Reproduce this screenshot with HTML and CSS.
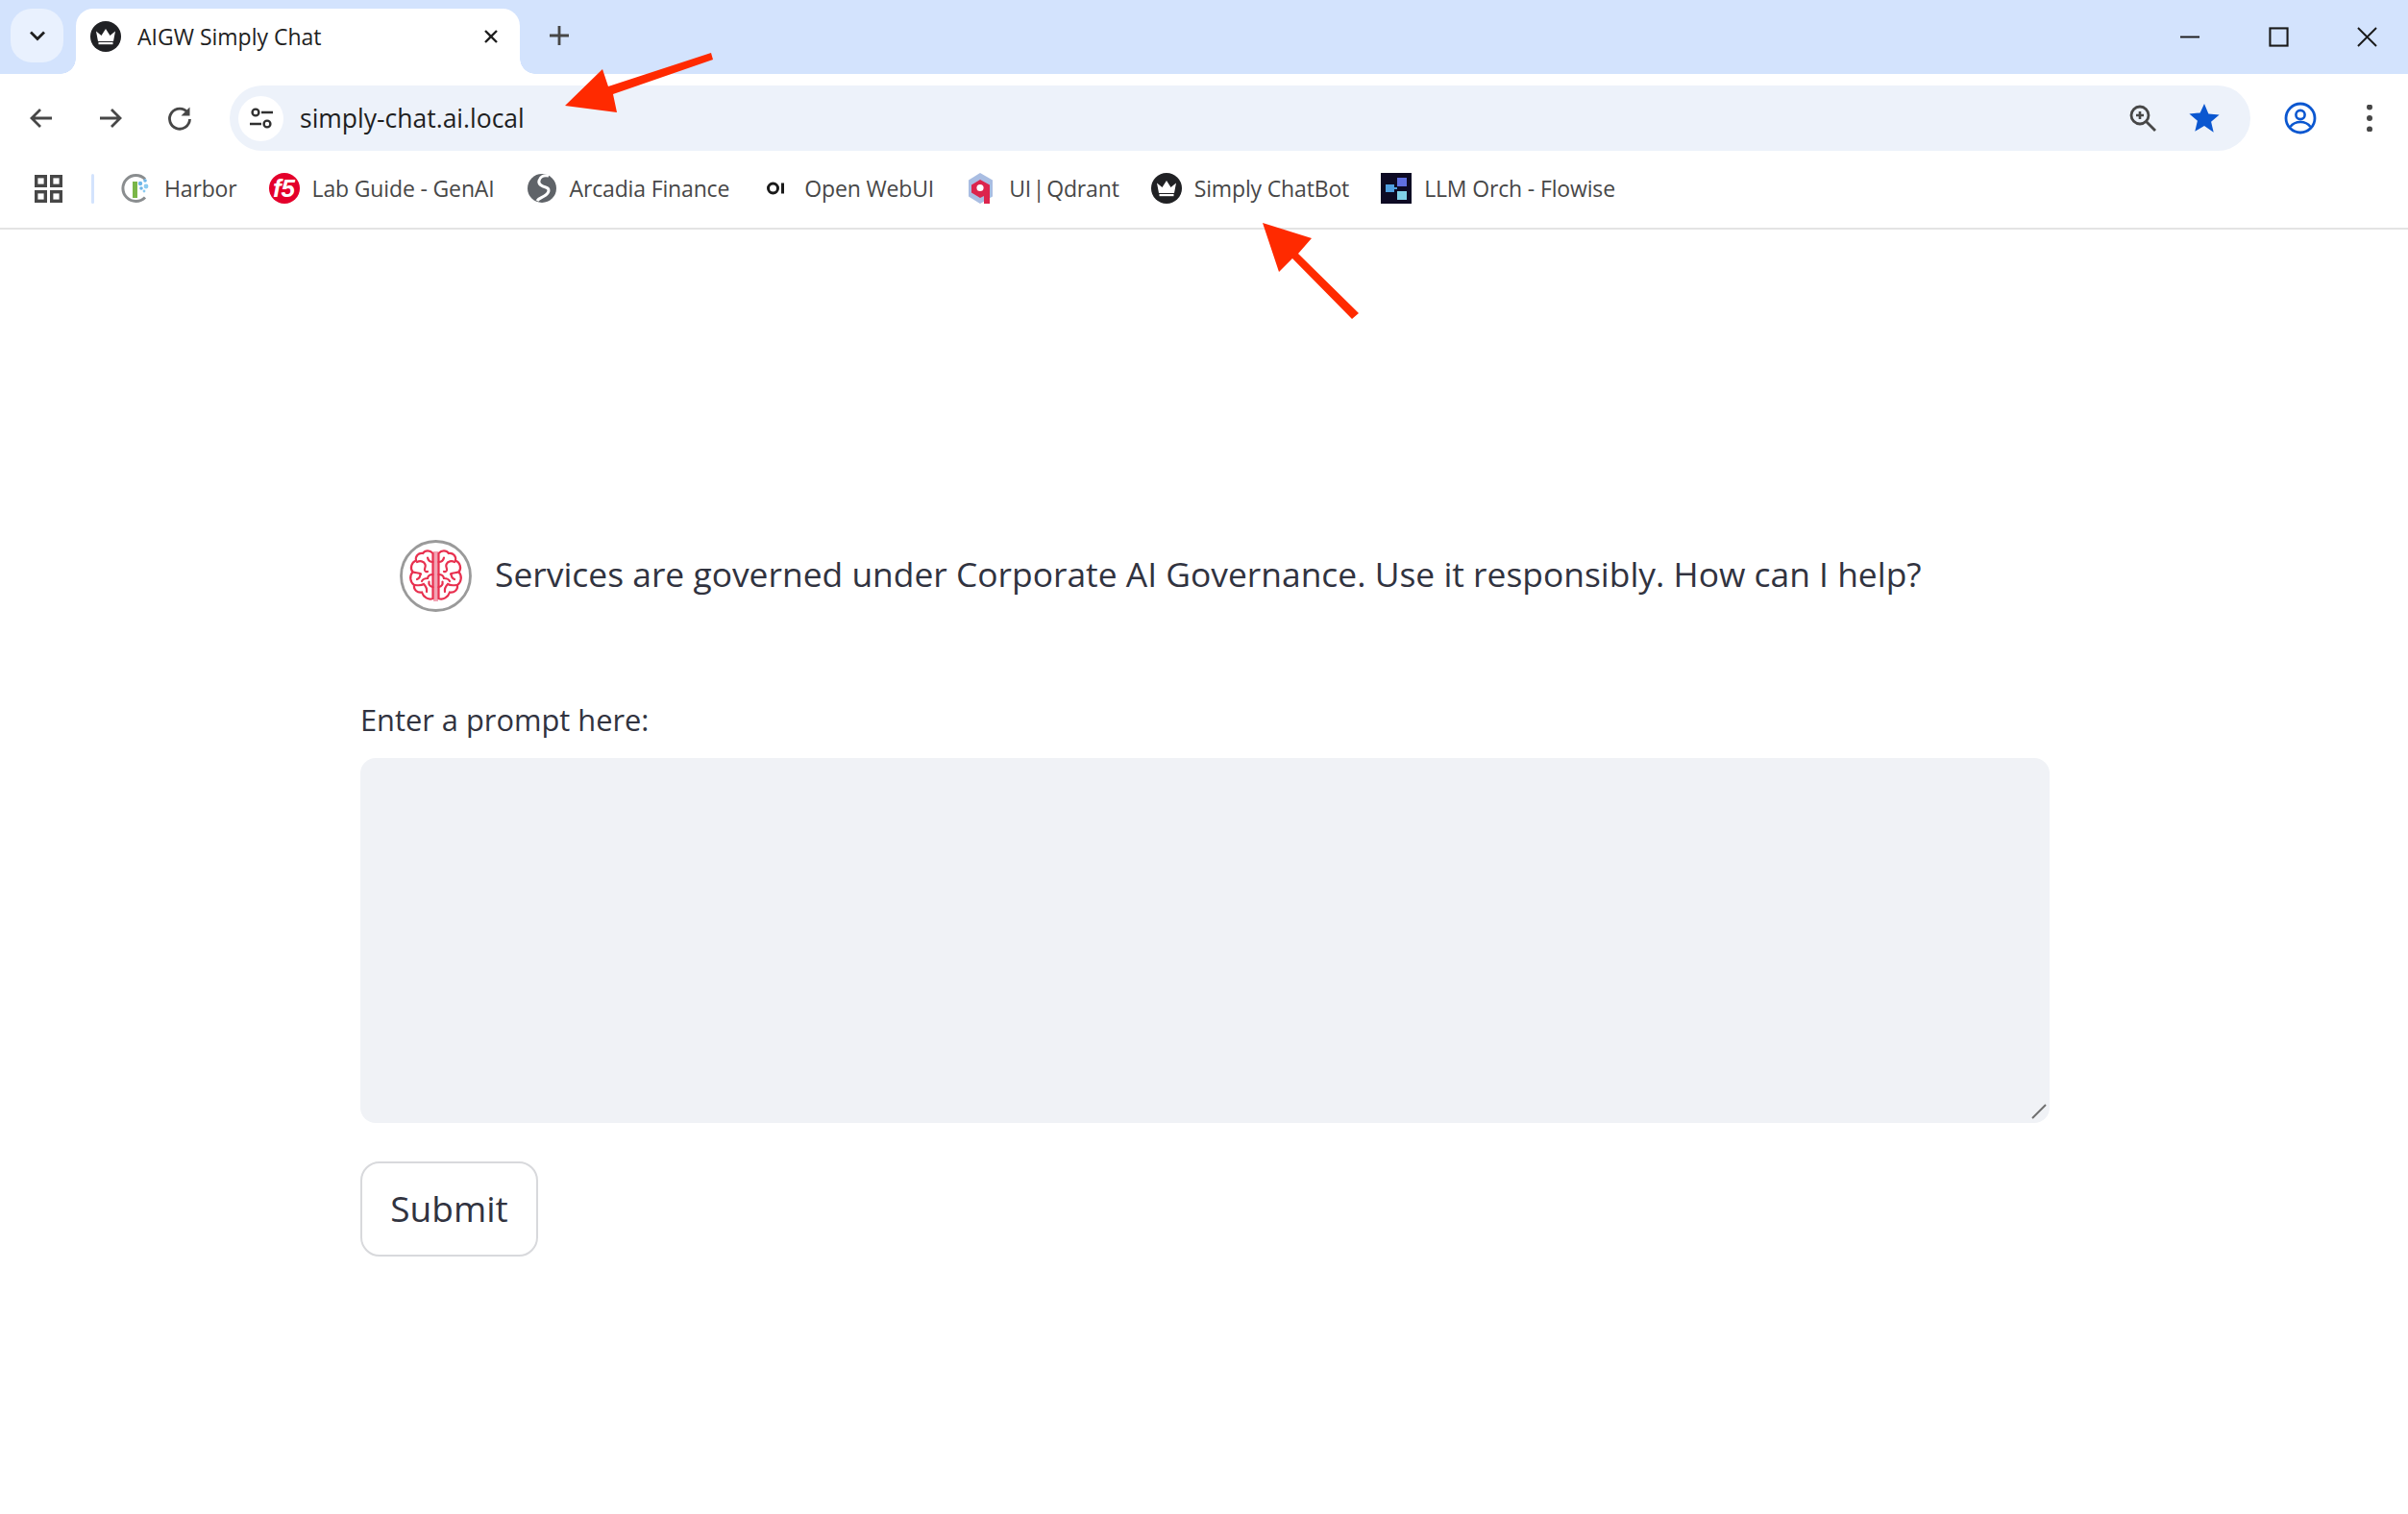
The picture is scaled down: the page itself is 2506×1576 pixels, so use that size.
FILE: index.html
```html
<!DOCTYPE html>
<html lang="en">
<head>
<meta charset="utf-8">
<title>AIGW Simply Chat</title>
<link rel="stylesheet" href="styles.css">
</head>
<body>
<svg class="defs" width="0" height="0" aria-hidden="true">
  <defs>
    <symbol id="crown" viewBox="0 0 32 32">
      <circle cx="16" cy="16" r="16" fill="#202124"/>
      <path d="M6 10.500l5.500 4.500L16 8l4.500 7 5.500-4.500-2 10.500H8z" fill="#fff"/>
      <rect x="8.500" y="22" width="15" height="2.200" fill="#fff"/>
    </symbol>
  </defs>
</svg>

<header class="chrome">
  <div class="tabstrip">
    <button class="tab-search" aria-label="Search tabs">
      <svg class="ic-chev" viewBox="0 0 20 20"><path d="M3 6.500l7 7 7-7" fill="none" stroke="#1f1f1f" stroke-width="2.800"/></svg>
    </button>
    <div class="tab">
      <svg class="ic-32"><use href="#crown"/></svg>
      <span class="tab-title">AIGW Simply Chat</span>
      <svg class="ic-close" viewBox="0 0 16 16"><path d="M2 2l12 12M14 2L2 14" stroke="#1f1f1f" stroke-width="2.400"/></svg>
    </div>
    <svg class="ic-plus" viewBox="0 0 22 22"><path d="M11 1v20M1 11h20" stroke="#474747" stroke-width="2.800"/></svg>
    <div class="win-controls">
      <svg class="ic-win" viewBox="0 0 22 22"><path d="M0 11h21" stroke="#1a1a1a" stroke-width="2"/></svg>
      <svg class="ic-win" viewBox="0 0 22 22"><rect x="1.500" y="1.500" width="19" height="19" fill="none" stroke="#1a1a1a" stroke-width="2.200"/></svg>
      <svg class="ic-win" viewBox="0 0 22 22"><path d="M1 1l20 20M21 1L1 21" stroke="#1a1a1a" stroke-width="2"/></svg>
    </div>
  </div>

  <div class="toolbar">
    <button class="tool-btn" aria-label="Back">
      <svg class="ic-28" viewBox="0 0 28 28"><path d="M25 14H4M13 5l-9 9 9 9" fill="none" stroke="#474747" stroke-width="2.800"/></svg>
    </button>
    <button class="tool-btn" aria-label="Forward">
      <svg class="ic-28" viewBox="0 0 28 28"><path d="M3 14h21M15 5l9 9-9 9" fill="none" stroke="#474747" stroke-width="2.800"/></svg>
    </button>
    <button class="tool-btn" aria-label="Reload">
      <svg class="ic-28" viewBox="0 0 28 28"><path d="M22.500 8.500A10.500 10.500 0 1 0 24.500 15" fill="none" stroke="#474747" stroke-width="2.800"/><path d="M24.500 2.500v9h-9z" fill="#474747"/></svg>
    </button>
    <div class="omnibox">
      <span class="site-chip">
        <svg class="ic-28" viewBox="0 0 28 28"><circle cx="8" cy="8" r="3.400" fill="none" stroke="#303030" stroke-width="2.400"/><path d="M14 8h12M2 20h12" stroke="#303030" stroke-width="2.400"/><circle cx="20" cy="20" r="3.400" fill="none" stroke="#303030" stroke-width="2.400"/></svg>
      </span>
      <span class="url">simply-chat.ai.local</span>
      <span class="omni-actions">
        <span class="omni-btn">
          <svg class="ic-28" viewBox="0 0 28 28"><circle cx="11" cy="11" r="9" fill="none" stroke="#474747" stroke-width="2.800"/><path d="M17.500 17.500L27 27" stroke="#474747" stroke-width="2.800"/><path d="M11 7v8M7 11h8" stroke="#474747" stroke-width="2.600"/></svg>
        </span>
        <span class="omni-btn">
          <svg class="ic-32" viewBox="0 0 32 32"><path d="M16 1l4.400 10.400 11.200 1-8.500 7.400 2.600 11L16 24l-9.700 5.800 2.600-11L.4 11.400l11.200-1z" fill="#0b57d0"/></svg>
        </span>
      </span>
    </div>
    <button class="tool-btn" aria-label="Profile">
      <svg class="ic-34" viewBox="0 0 34 34"><circle cx="17" cy="17" r="15" fill="none" stroke="#0b57d0" stroke-width="2.800"/><circle cx="17" cy="13.500" r="4.600" fill="none" stroke="#0b57d0" stroke-width="2.600"/><path d="M6.500 26c3-4 6.500-5 10.500-5s7.500 1 10.500 5" fill="none" stroke="#0b57d0" stroke-width="2.600"/></svg>
    </button>
    <button class="tool-btn" aria-label="Menu">
      <svg class="ic-28" viewBox="0 0 28 28"><circle cx="14" cy="2.500" r="3" fill="#474747"/><circle cx="14" cy="14" r="3" fill="#474747"/><circle cx="14" cy="25.500" r="3" fill="#474747"/></svg>
    </button>
  </div>

  <nav class="bookmarks">
    <svg class="ic-apps" viewBox="0 0 29 29"><g fill="none" stroke="#474747" stroke-width="3.400"><rect x="1.700" y="1.700" width="9.600" height="9.600"/><rect x="17.700" y="1.700" width="9.600" height="9.600"/><rect x="1.700" y="17.700" width="9.600" height="9.600"/><rect x="17.700" y="17.700" width="9.600" height="9.600"/></g></svg>
    <span class="bm-sep"></span>
    <div class="bm-list">
      <a class="bm">
        <svg class="ic-32" viewBox="0 0 32 32"><path d="M25 6.500A13.500 13.500 0 1 0 25 25.500" fill="none" stroke="#8a8d8f" stroke-width="3"/><rect x="12" y="9" width="5" height="17" fill="#7ab648"/><circle cx="20" cy="11" r="2.200" fill="#6db6e8"/><circle cx="25" cy="8" r="1.800" fill="#6db6e8"/><circle cx="26" cy="14" r="2.400" fill="#8ccbf0"/><circle cx="21" cy="16" r="1.800" fill="#6db6e8"/><circle cx="24" cy="19" r="1.400" fill="#8ccbf0"/></svg>
        <span>Harbor</span>
      </a>
      <a class="bm">
        <svg class="ic-32" viewBox="0 0 32 32"><circle cx="16" cy="16" r="16" fill="#e4002b"/><text class="f5-mark" x="15.500" y="25">f5</text></svg>
        <span>Lab Guide - GenAI</span>
      </a>
      <a class="bm">
        <svg class="ic-32" viewBox="0 0 32 32"><circle cx="16" cy="16" r="15" fill="#5f6368"/><path d="M23 3c-5-1-9 1-10 5s3 6 7 7 4 5 0 8-7 3-9 6" fill="none" stroke="#fff" stroke-width="3"/></svg>
        <span>Arcadia Finance</span>
      </a>
      <a class="bm">
        <svg class="ic-32" viewBox="0 0 32 32"><circle cx="12.500" cy="16" r="5" fill="none" stroke="#1a1a1a" stroke-width="3"/><rect x="21" y="10.500" width="3" height="11" fill="#1a1a1a"/></svg>
        <span>Open WebUI</span>
      </a>
      <a class="bm">
        <svg class="ic-32" viewBox="0 0 32 32"><path d="M15 0l13 7.500v17L15 32 3 24.500v-17z" fill="#a9bde2"/><path d="M15 7l10 5.500V32h-6v-8l-4 2-9-5.500v-8z" fill="#dc244c"/><circle cx="15" cy="15.500" r="3.600" fill="#fff"/></svg>
        <span class="bm-tight">UI | Qdrant</span>
      </a>
      <a class="bm">
        <svg class="ic-32"><use href="#crown"/></svg>
        <span>Simply ChatBot</span>
      </a>
      <a class="bm">
        <svg class="ic-32" viewBox="0 0 32 32"><rect width="32" height="32" fill="#0d0a24"/><rect x="17" y="5" width="10" height="9" fill="#5f6fe0"/><rect x="17" y="19" width="10" height="9" fill="#7fd0e8"/><rect x="5" y="12" width="9" height="8" fill="#4f9fe0"/><path d="M14 16h3" stroke="#4f9fe0" stroke-width="2"/></svg>
        <span>LLM Orch - Flowise</span>
      </a>
    </div>
  </nav>
</header>

<main class="page">
  <div class="greeting">
    <svg class="brain" viewBox="0 0 75 75">
      <circle cx="37.500" cy="37.500" r="36" fill="#fff" stroke="#9a9a9a" stroke-width="2.800"/>
      <path d="M37.500 12v52" stroke="#f2a3b3" stroke-width="5"/>
      <g fill="none" stroke="#e8304f" stroke-width="2.200" stroke-linecap="round">
        <path d="M34.500 14c-3-3.500-8-3.500-10.500 0-4.500-.8-8 3-7 7.500-5 2-6.500 8-3.500 12-3.700 4-2.700 10.500 1.500 13.500-.8 5 3.500 8.500 8 7.500 1.500 5 7 8.500 11.500 6.500z"/>
        <path d="M34.500 23c-3 0-5-2-5.500-4.500M18 23c3-1.500 7-1 8.500 2.500 1 2.500-1 4-.5 6 .5 1.500 2 2 3 1.500M14 33.500c3 1 6 .5 8 2M21.500 35c0 3-1 5-3.500 6M34.500 36c-3 0-5 1-5.500 4-3 0-5 1-6 3M34.500 49c-3.500-.5-4.500-3-4-5.500M16 47c4 .5 7 .5 9-1 2 2 3.500 5 3 8"/>
      </g>
      <g fill="none" stroke="#e8304f" stroke-width="2.200" stroke-linecap="round" transform="matrix(-1 0 0 1 75 0)">
        <path d="M34.500 14c-3-3.500-8-3.500-10.500 0-4.500-.8-8 3-7 7.500-5 2-6.500 8-3.500 12-3.700 4-2.700 10.500 1.500 13.500-.8 5 3.500 8.500 8 7.500 1.500 5 7 8.500 11.500 6.500z"/>
        <path d="M34.500 23c-3 0-5-2-5.500-4.500M18 23c3-1.500 7-1 8.500 2.500 1 2.500-1 4-.5 6 .5 1.500 2 2 3 1.500M14 33.500c3 1 6 .5 8 2M21.500 35c0 3-1 5-3.500 6M34.500 36c-3 0-5 1-5.500 4-3 0-5 1-6 3M34.500 49c-3.500-.5-4.500-3-4-5.500M16 47c4 .5 7 .5 9-1 2 2 3.500 5 3 8"/>
      </g>
    </svg>
    <p class="greeting-text">Services are governed under Corporate AI Governance. Use it responsibly. How can I help?</p>
  </div>

  <form class="prompt-form">
    <label class="prompt-label" for="prompt">Enter a prompt here:</label>
    <div class="prompt-box">
      <textarea class="prompt-input" id="prompt"></textarea>
      <svg class="grip" viewBox="0 0 16 16"><path d="M1 15L15 1" stroke="#6f6f6f" stroke-width="2"/></svg>
    </div>
    <button class="submit" type="button">Submit</button>
  </form>
</main>

<svg class="callout" viewBox="0 0 2506 1576" aria-hidden="true">
  <path d="M740 55L742 62 638 98 642 117 588 110 627 72 633 90z" fill="#ff2a00"/>
  <path d="M1314 232L1365 248 1351 264 1414 326 1407 332 1345 269 1331 283z" fill="#ff2a00"/>
</svg>
</body>
</html>
```

FILE: styles.css
```css
* { box-sizing: border-box; }

html, body {
  margin: 0;
  height: 100%;
  background: #fff;
}

body {
  position: relative;
  overflow: hidden;
  font-family: "Open Sans", "Noto Sans", sans-serif;
  color: #31333f;
}

.defs { position: absolute; }

button {
  background: none;
  border: 0;
  padding: 0;
  font: inherit;
  color: inherit;
}

svg { display: block; flex: none; }

.ic-28 { width: 28px; height: 28px; }
.ic-32 { width: 32px; height: 32px; }
.ic-34 { width: 34px; height: 34px; }

/* Tab strip */
.tabstrip {
  display: flex;
  align-items: flex-start;
  height: 77px;
  padding: 9px 0 0 11px;
  background: #d3e3fd;
}

.tab-search {
  display: flex;
  align-items: center;
  justify-content: center;
  width: 55px;
  height: 56px;
  border-radius: 22px;
  background: #e9f1fe;
}

.ic-chev { width: 20px; height: 20px; }

.tab {
  position: relative;
  display: flex;
  align-items: center;
  width: 462px;
  height: 68px;
  margin-left: 13px;
  padding: 0 22px 10px 15px;
  background: #fff;
  border-radius: 18px 18px 0 0;
}

.tab::before,
.tab::after {
  content: "";
  position: absolute;
  bottom: 0;
  width: 16px;
  height: 16px;
}

.tab::before {
  left: -16px;
  background: radial-gradient(circle at 0 0, transparent 15.500px, #fff 16px);
}

.tab::after {
  right: -16px;
  background: radial-gradient(circle at 100% 0, transparent 15.500px, #fff 16px);
}

.tab-title {
  flex: 1;
  margin-left: 17px;
  font-size: 23px;
  color: #1f1f1f;
}

.ic-close { width: 16px; height: 16px; }

.ic-plus {
  width: 22px;
  height: 22px;
  margin: 17px 0 0 30px;
}

.win-controls {
  display: flex;
  gap: 71px;
  margin: 19px 32px 0 auto;
}

.ic-win { width: 21px; height: 21px; }

/* Toolbar */
.toolbar {
  display: flex;
  align-items: center;
  height: 80px;
  padding: 12px 4px 0 7px;
  background: #fff;
  border-radius: 16px 16px 0 0;
}

.tool-btn {
  display: flex;
  align-items: center;
  justify-content: center;
  width: 72px;
  height: 68px;
}

.omnibox {
  display: flex;
  flex: 1;
  align-items: center;
  height: 68px;
  margin: 0 16px;
  padding: 0 16px 0 9px;
  background: #edf2fa;
  border-radius: 34px;
}

.site-chip {
  display: flex;
  align-items: center;
  justify-content: center;
  width: 47px;
  height: 47px;
  border-radius: 50%;
  background: #fff;
}

.url {
  margin-left: 17px;
  font-size: 26.500px;
  color: #1f1f1f;
}

.omni-actions {
  display: flex;
  margin-left: auto;
  align-items: center;
}

.omni-btn {
  display: flex;
  justify-content: center;
  width: 64px;
}

/* Bookmarks */
.bookmarks {
  display: flex;
  align-items: center;
  height: 82px;
  padding: 0 0 2px 36px;
  background: #fff;
  border-bottom: 2px solid #e3e3e3;
}

.ic-apps { width: 29px; height: 29px; }

.bm-sep {
  width: 3px;
  height: 31px;
  margin: 0 28px 0 30px;
  border-radius: 2px;
  background: #d3e3fd;
}

.bm-list {
  display: flex;
  gap: 33px;
}

.bm {
  display: flex;
  align-items: center;
  gap: 13px;
  font-size: 23px;
  letter-spacing: -0.15px;
  color: #474747;
}

.bm-tight { word-spacing: -4px; }

/* Page */
.page {
  padding: 323px 373px 0 375px;
}

.greeting {
  display: flex;
  align-items: center;
  gap: 24px;
  padding-left: 41px;
}

.brain { width: 75px; height: 75px; }

.greeting-text {
  margin: 0 0 5px;
  font-size: 35.400px;
  line-height: 70px;
}

.prompt-form {
  display: flex;
  flex-direction: column;
  align-items: flex-start;
  margin-top: 92px;
}

.prompt-label {
  margin-bottom: 20px;
  font-size: 30.800px;
  line-height: 40px;
}

.prompt-box {
  position: relative;
  width: 100%;
  height: 380px;
}

.prompt-input {
  display: block;
  width: 100%;
  height: 100%;
  border: 0;
  border-radius: 16px;
  background: #f0f2f6;
  resize: none;
  outline: none;
}

.grip {
  position: absolute;
  right: 3px;
  bottom: 4px;
  width: 16px;
  height: 16px;
}

.submit {
  width: 185px;
  height: 99px;
  margin-top: 40px;
  padding-bottom: 3px;
  border: 2px solid #d8d9dc;
  border-radius: 20px;
  background: #fff;
  font-size: 37px;
  color: #31333f;
}

/* Annotation arrows laid over the screenshot */
.callout {
  position: absolute;
  top: 0;
  left: 0;
  width: 2506px;
  height: 1576px;
  pointer-events: none;
}

.f5-mark {
  font-family: "Liberation Sans", sans-serif;
  font-size: 26px;
  font-weight: 700;
  font-style: italic;
  fill: #fff;
  text-anchor: middle;
}
```
